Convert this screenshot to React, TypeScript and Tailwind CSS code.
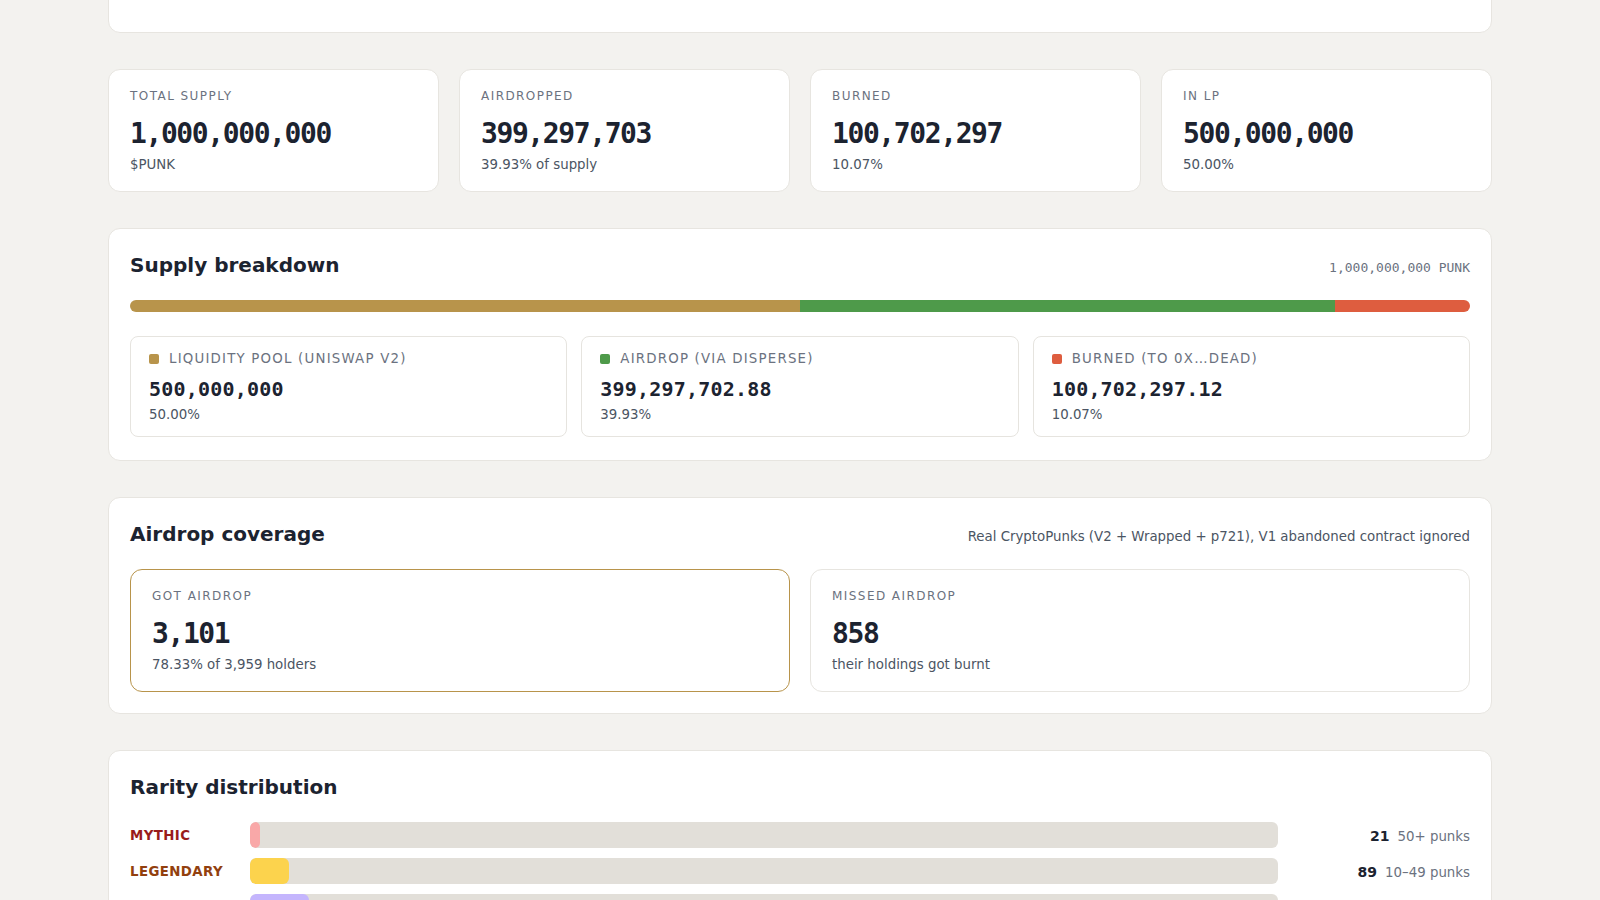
const stats = [
  { label: "Total supply", value: "1,000,000,000", sub: "$PUNK" },
  { label: "Airdropped", value: "399,297,703", sub: "39.93% of supply" },
  { label: "Burned", value: "100,702,297", sub: "10.07%" },
  { label: "In LP", value: "500,000,000", sub: "50.00%" },
];

const breakdown = [
  { label: "Liquidity pool (Uniswap V2)", value: "500,000,000", pct: "50.00%", share: 50, color: "bg-[#b8944b]" },
  { label: "Airdrop (via Disperse)", value: "399,297,702.88", pct: "39.93%", share: 39.93, color: "bg-[#4e9a4a]" },
  { label: "Burned (to 0x…dead)", value: "100,702,297.12", pct: "10.07%", share: 10.07, color: "bg-[#de5d3f]" },
];

const rarity = [
  { tier: "Mythic", count: 21, range: "50+ punks", width: 10, text: "text-[#991b1b]", fill: "bg-[#f9a8a8]" },
  { tier: "Legendary", count: 89, range: "10–49 punks", width: 39, text: "text-[#92400e]", fill: "bg-[#fcd34d]" },
  { tier: "Epic", count: 137, range: "5–9 punks", width: 59, text: "text-[#5b21b6]", fill: "bg-[#c4b5fd]" },
  { tier: "Rare", count: 402, range: "2–4 punks", width: 170, text: "text-[#1e40af]", fill: "bg-[#93c5fd]" },
];

function StatCard({
  label,
  value,
  sub,
  highlight = false,
}: {
  label: string;
  value: string;
  sub: string;
  highlight?: boolean;
}) {
  return (
    <div
      className={`rounded-xl border bg-white px-[21px] pt-[17px] pb-4 ${
        highlight ? "border-[#b8944b]" : "border-[#e7e5e0]"
      }`}
    >
      <div className="text-xs leading-[18px] uppercase tracking-[0.12em] text-[#6b7280]">{label}</div>
      <div className="mt-3 font-['DejaVu_Sans_Mono',monospace] text-[28px] font-bold leading-[34px] tracking-[-0.05em] text-[#1c2330]">
        {value}
      </div>
      <div className="mt-1 text-[13.35px] leading-5 text-[#4b5563]">{sub}</div>
    </div>
  );
}

export default function App() {
  return (
    <div className="h-screen overflow-hidden bg-[#f3f2ef] font-['DejaVu_Sans',sans-serif]">
      <div className="mx-auto flex max-w-[1400px] flex-col gap-9 px-2">
        {/* card scrolled off the top */}
        <div className="-mt-[199px] h-[232px] rounded-xl border border-[#e7e5e0] bg-white" />

        {/* STATS */}
        <div className="grid grid-cols-4 gap-5">
          {stats.map((s) => (
            <StatCard key={s.label} {...s} />
          ))}
        </div>

        {/* SUPPLY BREAKDOWN */}
        <section className="rounded-xl border border-[#e7e5e0] bg-white px-[21px] pt-[22px] pb-[23px]">
          <div className="flex items-baseline justify-between">
            <h2 className="text-[20px] font-bold leading-7 text-[#1c2330]">Supply breakdown</h2>
            <span className="font-['DejaVu_Sans_Mono',monospace] text-[13px] text-[#6b7280]">
              1,000,000,000 PUNK
            </span>
          </div>
          <div className="mt-[21px] flex h-3 overflow-hidden rounded-full">
            {breakdown.map((b) => (
              <div key={b.label} className={`h-full ${b.color}`} style={{ width: `${b.share}%` }} />
            ))}
          </div>
          <div className="mt-6 grid grid-cols-3 gap-[14px]">
            {breakdown.map((b) => (
              <div key={b.label} className="rounded-lg border border-[#e6e4df] px-[18px] pt-3 pb-[11px]">
                <div className="flex items-center gap-2.5">
                  <span className={`h-2.5 w-2.5 rounded-[2px] ${b.color}`} />
                  <span className="text-[13.35px] leading-5 uppercase tracking-[0.09em] text-[#6b7280]">
                    {b.label}
                  </span>
                </div>
                <div className="mt-1.5 font-['DejaVu_Sans_Mono',monospace] text-[20px] font-bold leading-7 tracking-[0.01em] text-[#1c2330]">
                  {b.value}
                </div>
                <div className="mt-0.5 text-[13.35px] leading-5 text-[#4b5563]">{b.pct}</div>
              </div>
            ))}
          </div>
        </section>

        {/* AIRDROP COVERAGE */}
        <section className="rounded-xl border border-[#e7e5e0] bg-white px-[21px] pt-[22px] pb-[21px]">
          <div className="flex items-baseline justify-between">
            <h2 className="text-[20px] font-bold leading-7 text-[#1c2330]">Airdrop coverage</h2>
            <span className="text-[13.35px] text-[#4b5563]">
              Real CryptoPunks (V2 + Wrapped + p721), V1 abandoned contract ignored
            </span>
          </div>
          <div className="mt-[21px] grid grid-cols-2 gap-5">
            <StatCard label="Got airdrop" value="3,101" sub="78.33% of 3,959 holders" highlight />
            <StatCard label="Missed airdrop" value="858" sub="their holdings got burnt" />
          </div>
        </section>

        {/* RARITY */}
        <section className="rounded-xl border border-[#e7e5e0] bg-white p-[21px]">
          <h2 className="mt-px text-[20px] font-bold leading-7 text-[#1c2330]">Rarity distribution</h2>
          <div className="mt-[21px] flex flex-col gap-[10px]">
            {rarity.map((r) => (
              <div key={r.tier} className="flex items-center gap-3">
                <div className={`w-[108px] pt-0.5 text-[13.35px] font-bold uppercase tracking-[0.03em] ${r.text}`}>
                  {r.tier}
                </div>
                <div className="h-[26px] flex-1 overflow-hidden rounded-md bg-[#e2dfd9]">
                  <div className={`h-full rounded-md ${r.fill}`} style={{ width: `${r.width}px` }} />
                </div>
                <div className="w-[180px] pt-0.5 text-right">
                  <span className="text-sm font-bold text-[#1c2330]">{r.count}</span>
                  <span className="ml-2 text-[13.35px] text-[#6b7280]">{r.range}</span>
                </div>
              </div>
            ))}
          </div>
        </section>
      </div>
    </div>
  );
}
